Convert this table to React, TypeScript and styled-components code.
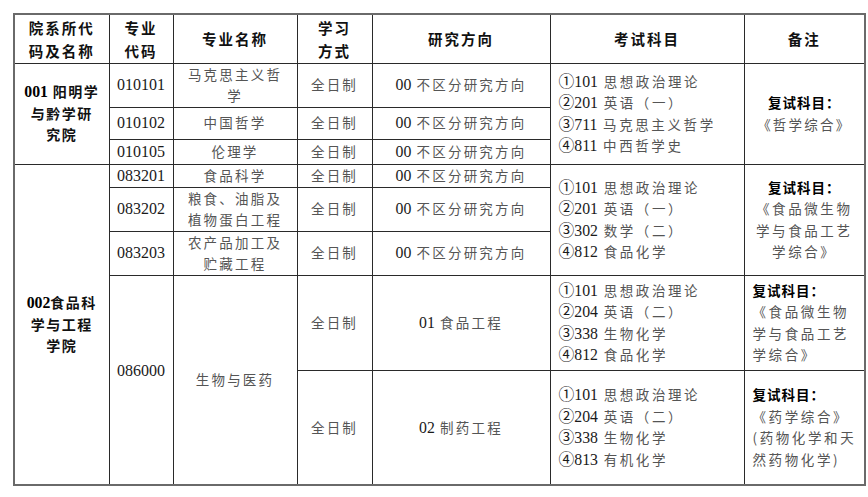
import React from "react";
import styled, { createGlobalStyle } from "styled-components";

const Global = createGlobalStyle`
  html, body { margin: 0; padding: 0; background: #fff; }
  body { font-family: "Liberation Serif", "Noto Sans CJK SC", serif; }
`;

const Page = styled.div`
  padding: 13px 0 0 13px;
`;

const Table = styled.table`
  border-collapse: collapse;
  table-layout: fixed;
  width: 851px;
  border: 2px solid #6a6a6a;
`;

const Row = styled.tr<{ $h: number }>`
  height: ${(p) => p.$h}px;
`;

const Th = styled.th`
  border: 1px solid #2a2a2a;
  padding: 0;
  font-family: "Noto Sans CJK SC", sans-serif;
  font-weight: 700;
  font-size: 14.5px;
  letter-spacing: 2px;
  line-height: 23px;
  color: #111;
  text-align: center;
  vertical-align: middle;
`;

const Td = styled.td<{ $align?: "left" | "center"; $space?: number }>`
  border: 1px solid #2a2a2a;
  padding: 0 ${(p) => (p.$align === "left" ? "4px 0 8px" : "4px")};
  font-family: "Noto Sans CJK SC", sans-serif;
  font-size: 13.5px;
  letter-spacing: ${(p) => p.$space ?? 2.2}px;
  line-height: 21.5px;
  color: #555;
  text-align: ${(p) => p.$align ?? "center"};
  vertical-align: middle;
  white-space: nowrap;
  overflow: hidden;
`;

const College = styled(Td)`
  color: #111;
  font-weight: 700;
  font-size: 14px;
  letter-spacing: 1.5px;
`;

const Code = styled(Td)<{ $lift?: number }>`
  font-family: "Liberation Serif", serif;
  font-size: 16px;
  letter-spacing: 0;
  color: #1a1a1a;
  padding-bottom: ${(p) => p.$lift ?? 0}px;
`;

const Num = styled.span`
  font-family: "Liberation Serif", "Noto Sans CJK SC", serif;
  font-size: 15.8px;
  letter-spacing: 0;
  color: #1a1a1a;
  font-weight: inherit;
`;

const BoldNum = styled(Num)`
  font-weight: 700;
  color: #000;
`;

const Strong = styled.span`
  font-weight: 700;
  color: #000;
  letter-spacing: 1px;
`;

const Line = styled.div``;

type Exam = [string, string][];

const ExamList = ({ items }: { items: Exam }) => (
  <>
    {items.map(([n, t], i) => (
      <Line key={i}>
        <Num>{n}</Num> {t}
      </Line>
    ))}
  </>
);

const Remark = ({ lines }: { lines: string[] }) => (
  <>
    <Line>
      <Strong>复试科目：</Strong>
    </Line>
    {lines.map((l, i) => (
      <Line key={i}>{l}</Line>
    ))}
  </>
);

const Direction = ({ n, t }: { n: string; t: string }) => (
  <>
    <Num>{n}</Num> {t}
  </>
);

export default function App() {
  return (
    <Page>
      <Global />
      <Table>
        <colgroup>
          <col style={{ width: 95 }} />
          <col style={{ width: 64 }} />
          <col style={{ width: 124 }} />
          <col style={{ width: 75 }} />
          <col style={{ width: 178 }} />
          <col style={{ width: 194 }} />
          <col style={{ width: 121 }} />
        </colgroup>
        <tbody>
          <Row $h={49}>
            <Th>
              院系所代
              <br />
              码及名称
            </Th>
            <Th>
              专业
              <br />
              代码
            </Th>
            <Th>专业名称</Th>
            <Th>
              学习
              <br />
              方式
            </Th>
            <Th>研究方向</Th>
            <Th>考试科目</Th>
            <Th>备注</Th>
          </Row>

          <Row $h={44}>
            <College rowSpan={3}>
              <BoldNum>001</BoldNum> 阳明学
              <br />
              与黔学研
              <br />
              究院
            </College>
            <Code>010101</Code>
            <Td>
              马克思主义哲
              <br />学
            </Td>
            <Td>全日制</Td>
            <Td>
              <Direction n="00" t="不区分研究方向" />
            </Td>
            <Td rowSpan={3} $align="left" $space={2.6}>
              <ExamList
                items={[
                  ["①101", "思想政治理论"],
                  ["②201", "英语（一）"],
                  ["③711", "马克思主义哲学"],
                  ["④811", "中西哲学史"],
                ]}
              />
            </Td>
            <Td rowSpan={3}>
              <Remark lines={["《哲学综合》"]} />
            </Td>
          </Row>
          <Row $h={32}>
            <Code>010102</Code>
            <Td>中国哲学</Td>
            <Td>全日制</Td>
            <Td>
              <Direction n="00" t="不区分研究方向" />
            </Td>
          </Row>
          <Row $h={25}>
            <Code>010105</Code>
            <Td>伦理学</Td>
            <Td>全日制</Td>
            <Td>
              <Direction n="00" t="不区分研究方向" />
            </Td>
          </Row>

          <Row $h={23}>
            <College rowSpan={5}>
              <BoldNum>002</BoldNum>食品科
              <br />
              学与工程
              <br />
              学院
            </College>
            <Code>083201</Code>
            <Td>食品科学</Td>
            <Td>全日制</Td>
            <Td>
              <Direction n="00" t="不区分研究方向" />
            </Td>
            <Td rowSpan={3} $align="left" $space={2.6}>
              <ExamList
                items={[
                  ["①101", "思想政治理论"],
                  ["②201", "英语（一）"],
                  ["③302", "数学（二）"],
                  ["④812", "食品化学"],
                ]}
              />
            </Td>
            <Td rowSpan={3} $space={2.6}>
              <Remark lines={["《食品微生物", "学与食品工艺", "学综合》"]} />
            </Td>
          </Row>
          <Row $h={44}>
            <Code>083202</Code>
            <Td>
              粮食、油脂及
              <br />
              植物蛋白工程
            </Td>
            <Td>全日制</Td>
            <Td>
              <Direction n="00" t="不区分研究方向" />
            </Td>
          </Row>
          <Row $h={44}>
            <Code>083203</Code>
            <Td>
              农产品加工及
              <br />
              贮藏工程
            </Td>
            <Td>全日制</Td>
            <Td>
              <Direction n="00" t="不区分研究方向" />
            </Td>
          </Row>

          <Row $h={95}>
            <Code rowSpan={2} $lift={18}>
              086000
            </Code>
            <Td rowSpan={2}>生物与医药</Td>
            <Td>全日制</Td>
            <Td>
              <Direction n="01" t="食品工程" />
            </Td>
            <Td $align="left" $space={2.6}>
              <ExamList
                items={[
                  ["①101", "思想政治理论"],
                  ["②204", "英语（二）"],
                  ["③338", "生物化学"],
                  ["④812", "食品化学"],
                ]}
              />
            </Td>
            <Td $align="left" $space={2.6}>
              <Remark lines={["《食品微生物", "学与食品工艺", "学综合》"]} />
            </Td>
          </Row>
          <Row $h={115}>
            <Td>全日制</Td>
            <Td>
              <Direction n="02" t="制药工程" />
            </Td>
            <Td $align="left" $space={2.6}>
              <ExamList
                items={[
                  ["①101", "思想政治理论"],
                  ["②204", "英语（二）"],
                  ["③338", "生物化学"],
                  ["④813", "有机化学"],
                ]}
              />
            </Td>
            <Td $align="left" $space={2.6}>
              <Remark lines={["《药学综合》", "(药物化学和天", "然药物化学)"]} />
            </Td>
          </Row>
        </tbody>
      </Table>
    </Page>
  );
}
